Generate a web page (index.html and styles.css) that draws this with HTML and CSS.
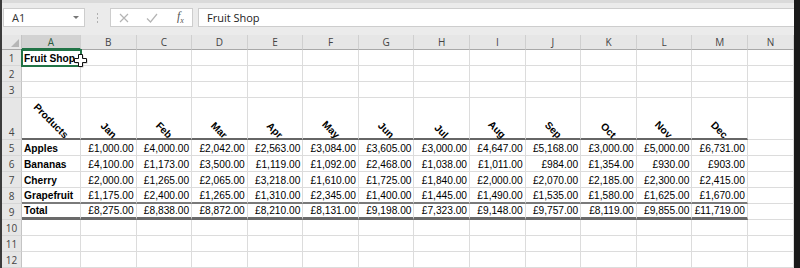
FILE: index.html
```html
<!DOCTYPE html>
<html lang="en">
<head>
    <meta charset="UTF-8">
    <meta name="viewport" content="width=device-width, initial-scale=1.0">
    <title>Fruit Shop - Book1</title>
    <link rel="stylesheet" href="styles.css">
</head>
<body>
    <div class="window">
        <div class="edge-left"></div>
        <div class="app">
            <div class="formula-bar">
                <div class="name-box"><span>A1</span><span class="caret"></span></div>
                <div class="grip"><i></i><i></i><i></i></div>
                <div class="fn-buttons">
                    <svg class="icon-x" width="10" height="10" viewBox="0 0 10 10"><path d="M1 1 L9 9 M9 1 L1 9" stroke="#b4b4b4" stroke-width="1.2" fill="none"/></svg>
                    <svg class="icon-ok" width="12" height="10" viewBox="0 0 12 10"><path d="M1 5.5 L4.5 9 L11 1" stroke="#b4b4b4" stroke-width="1.2" fill="none"/></svg>
                    <span class="fx">f<sub>x</sub></span>
                </div>
                <div class="formula-input">Fruit Shop</div>
            </div>

            <div class="sheet">
                <div class="corner"><span class="tri"></span></div>
                <div class="col sel">A</div><div class="col">B</div><div class="col">C</div><div class="col">D</div><div class="col">E</div><div class="col">F</div><div class="col">G</div><div class="col">H</div><div class="col">I</div><div class="col">J</div><div class="col">K</div><div class="col">L</div><div class="col">M</div><div class="col">N</div>

                <div class="rh">1</div><div class="cell bold active">Fruit Shop</div><div class="cell"></div><div class="cell"></div><div class="cell"></div><div class="cell"></div><div class="cell"></div><div class="cell"></div><div class="cell"></div><div class="cell"></div><div class="cell"></div><div class="cell"></div><div class="cell"></div><div class="cell"></div><div class="cell"></div>
                <div class="rh">2</div><div class="cell"></div><div class="cell"></div><div class="cell"></div><div class="cell"></div><div class="cell"></div><div class="cell"></div><div class="cell"></div><div class="cell"></div><div class="cell"></div><div class="cell"></div><div class="cell"></div><div class="cell"></div><div class="cell"></div><div class="cell"></div>
                <div class="rh">3</div><div class="cell"></div><div class="cell"></div><div class="cell"></div><div class="cell"></div><div class="cell"></div><div class="cell"></div><div class="cell"></div><div class="cell"></div><div class="cell"></div><div class="cell"></div><div class="cell"></div><div class="cell"></div><div class="cell"></div><div class="cell"></div>

                <div class="rh">4</div>
                <div class="cell rot line-head"><span>Products</span></div>
                <div class="cell rot line-head"><span>Jan</span></div>
                <div class="cell rot line-head"><span>Feb</span></div>
                <div class="cell rot line-head"><span>Mar</span></div>
                <div class="cell rot line-head"><span>Apr</span></div>
                <div class="cell rot line-head"><span>May</span></div>
                <div class="cell rot line-head"><span>Jun</span></div>
                <div class="cell rot line-head"><span>Jul</span></div>
                <div class="cell rot line-head"><span>Aug</span></div>
                <div class="cell rot line-head"><span>Sep</span></div>
                <div class="cell rot line-head"><span>Oct</span></div>
                <div class="cell rot line-head"><span>Nov</span></div>
                <div class="cell rot line-head"><span>Dec</span></div>
                <div class="cell"></div>

                <div class="rh">5</div><div class="cell bold">Apples</div><div class="cell num">£1,000.00</div><div class="cell num">£4,000.00</div><div class="cell num">£2,042.00</div><div class="cell num">£2,563.00</div><div class="cell num">£3,084.00</div><div class="cell num">£3,605.00</div><div class="cell num">£3,000.00</div><div class="cell num">£4,647.00</div><div class="cell num">£5,168.00</div><div class="cell num">£3,000.00</div><div class="cell num">£5,000.00</div><div class="cell num">£6,731.00</div><div class="cell"></div>
                <div class="rh">6</div><div class="cell bold">Bananas</div><div class="cell num">£4,100.00</div><div class="cell num">£1,173.00</div><div class="cell num">£3,500.00</div><div class="cell num">£1,119.00</div><div class="cell num">£1,092.00</div><div class="cell num">£2,468.00</div><div class="cell num">£1,038.00</div><div class="cell num">£1,011.00</div><div class="cell num">£984.00</div><div class="cell num">£1,354.00</div><div class="cell num">£930.00</div><div class="cell num">£903.00</div><div class="cell"></div>
                <div class="rh">7</div><div class="cell bold">Cherry</div><div class="cell num">£2,000.00</div><div class="cell num">£1,265.00</div><div class="cell num">£2,065.00</div><div class="cell num">£3,218.00</div><div class="cell num">£1,610.00</div><div class="cell num">£1,725.00</div><div class="cell num">£1,840.00</div><div class="cell num">£2,000.00</div><div class="cell num">£2,070.00</div><div class="cell num">£2,185.00</div><div class="cell num">£2,300.00</div><div class="cell num">£2,415.00</div><div class="cell"></div>
                <div class="rh">8</div><div class="cell bold line-mid">Grapefruit</div><div class="cell num line-mid">£1,175.00</div><div class="cell num line-mid">£2,400.00</div><div class="cell num line-mid">£1,265.00</div><div class="cell num line-mid">£1,310.00</div><div class="cell num line-mid">£2,345.00</div><div class="cell num line-mid">£1,400.00</div><div class="cell num line-mid">£1,445.00</div><div class="cell num line-mid">£1,490.00</div><div class="cell num line-mid">£1,535.00</div><div class="cell num line-mid">£1,580.00</div><div class="cell num line-mid">£1,625.00</div><div class="cell num line-mid">£1,670.00</div><div class="cell"></div>
                <div class="rh">9</div><div class="cell bold line-sum">Total</div><div class="cell num line-sum">£8,275.00</div><div class="cell num line-sum">£8,838.00</div><div class="cell num line-sum">£8,872.00</div><div class="cell num line-sum">£8,210.00</div><div class="cell num line-sum">£8,131.00</div><div class="cell num line-sum">£9,198.00</div><div class="cell num line-sum">£7,323.00</div><div class="cell num line-sum">£9,148.00</div><div class="cell num line-sum">£9,757.00</div><div class="cell num line-sum">£8,119.00</div><div class="cell num line-sum">£9,855.00</div><div class="cell num line-sum">£11,719.00</div><div class="cell"></div>

                <div class="rh">10</div><div class="cell"></div><div class="cell"></div><div class="cell"></div><div class="cell"></div><div class="cell"></div><div class="cell"></div><div class="cell"></div><div class="cell"></div><div class="cell"></div><div class="cell"></div><div class="cell"></div><div class="cell"></div><div class="cell"></div><div class="cell"></div>
                <div class="rh">11</div><div class="cell"></div><div class="cell"></div><div class="cell"></div><div class="cell"></div><div class="cell"></div><div class="cell"></div><div class="cell"></div><div class="cell"></div><div class="cell"></div><div class="cell"></div><div class="cell"></div><div class="cell"></div><div class="cell"></div><div class="cell"></div>
                <div class="rh">12</div><div class="cell"></div><div class="cell"></div><div class="cell"></div><div class="cell"></div><div class="cell"></div><div class="cell"></div><div class="cell"></div><div class="cell"></div><div class="cell"></div><div class="cell"></div><div class="cell"></div><div class="cell"></div><div class="cell"></div><div class="cell"></div>

                <!-- mouse pointer over the fill handle -->
                <svg class="pointer" width="14" height="14" viewBox="0 0 14 14">
                    <path d="M5.5 1.5 H9.5 V5.5 H13.5 V9.5 H9.5 V13.5 H5.5 V9.5 H1.5 V5.5 H5.5 Z" fill="#9a9a9a" opacity="0.6"/>
                    <path d="M4.5 0.5 H8.5 V4.5 H12.5 V8.5 H8.5 V12.5 H4.5 V8.5 H0.5 V4.5 H4.5 Z" fill="#fff" stroke="#111" stroke-width="1"/>
                </svg>
            </div>
        </div>
        <div class="edge-right"></div>
    </div>
</body>
</html>
```

FILE: styles.css
```css
body {
    margin: 0;
    padding: 0;
    font-family: "Liberation Sans", Arial, sans-serif;
    background-color: #fff;
    overflow: hidden;
}

.window {
    display: flex;
    height: 268px;
}
.edge-left { width: 2px; background-color: #3b3b3b; }
.edge-right { width: 6px; background-color: #1a1a1a; }

.app {
    flex: 1;
    min-width: 0;
    display: flex;
    flex-direction: column;
    overflow: hidden;
}

/* formula bar */
.formula-bar {
    height: 37px;
    box-sizing: border-box;
    border-top: 3px solid #dadada;
    padding: 5px 0 8px 1px;
    display: flex;
    background-color: #ebebeb;
    font-family: "Open Sans", sans-serif;
    font-size: 11px;
    color: #333;
}

.name-box, .fn-buttons, .formula-input {
    background-color: #fff;
    border: 1px solid #cdcdcd;
    box-sizing: border-box;
    display: flex;
    align-items: center;
}

.name-box {
    width: 82px;
    justify-content: space-between;
    padding: 0 5px 0 8px;
}
.caret {
    width: 0;
    height: 0;
    border-left: 3px solid transparent;
    border-right: 3px solid transparent;
    border-top: 3px solid #777;
}

.grip {
    width: 25px;
    display: flex;
    flex-direction: column;
    align-items: center;
    justify-content: center;
    gap: 2px;
}
.grip i {
    display: block;
    width: 1px;
    height: 2px;
    background-color: #b0b0b0;
}

.fn-buttons {
    width: 83px;
    padding-left: 8px;
    gap: 17px;
}
.fx {
    font-family: "Liberation Serif", serif;
    font-style: italic;
    font-size: 12px;
    color: #555;
    margin-left: 2px;
}
.fx sub { font-size: 8px; }

.formula-input {
    flex: 1;
    margin-left: 5px;
    padding-left: 8px;
    border-right: none;
    color: #222;
}

/* grid */
.sheet {
    position: relative;
    display: grid;
    grid-template-columns: 20px 59px repeat(12, 55.58px) 1fr;
    grid-template-rows: 15px 16px 16px 16px 42px repeat(8, 16px);
    font-size: 10.2px;
    color: #000;
}

.corner, .col, .rh {
    background-color: #e6e6e6;
    color: #444;
    font-family: "Open Sans", sans-serif;
    font-size: 10px;
    box-sizing: border-box;
}

.corner {
    border-right: 1px solid #c4c4c4;
    border-bottom: 1px solid #a8a8a8;
    display: flex;
    align-items: flex-end;
    justify-content: flex-end;
    padding: 0 2px 2px 0;
}
.tri {
    width: 0;
    height: 0;
    border-left: 8px solid transparent;
    border-bottom: 8px solid #b6b6b6;
}

.col {
    border-right: 1px solid #cfcfcf;
    border-bottom: 1px solid #a8a8a8;
    display: flex;
    align-items: center;
    justify-content: center;
}
.col.sel {
    background-color: #d2d2d2;
    color: #2b5c3e;
    border-bottom: 2px solid #217346;
}

.rh {
    border-right: 1px solid #c4c4c4;
    border-bottom: 1px solid #d6d6d6;
    display: flex;
    align-items: flex-end;
    justify-content: center;
    line-height: 14px;
}

.cell {
    box-sizing: border-box;
    border-right: 1px solid #dcdcdc;
    border-bottom: 1px solid #dcdcdc;
    padding: 0 2px;
    display: flex;
    align-items: flex-end;
    line-height: 13px;
    white-space: nowrap;
}
.bold { font-weight: bold; }
.num { justify-content: flex-end; }

.active {
    position: relative;
    z-index: 1;
    outline: 2px solid #217346;
    outline-offset: -1px;
}

/* rotated month headings, centred on the column */
.rot {
    justify-content: center;
    overflow: visible;
}
.rot span {
    display: inline-block;
    font-weight: bold;
    line-height: 11px;
    margin-bottom: -4px;
    transform: translateX(35.36%) rotate(45deg) translateX(-50%);
}

.line-head { border-bottom: 2px solid #666; }
.line-mid { border-bottom: 2px solid #7a7a7a; }
.line-sum { border-bottom: 3px solid #6a6a6a; }

.pointer {
    position: absolute;
    left: 72px;
    top: 19px;
    z-index: 2;
}
```
